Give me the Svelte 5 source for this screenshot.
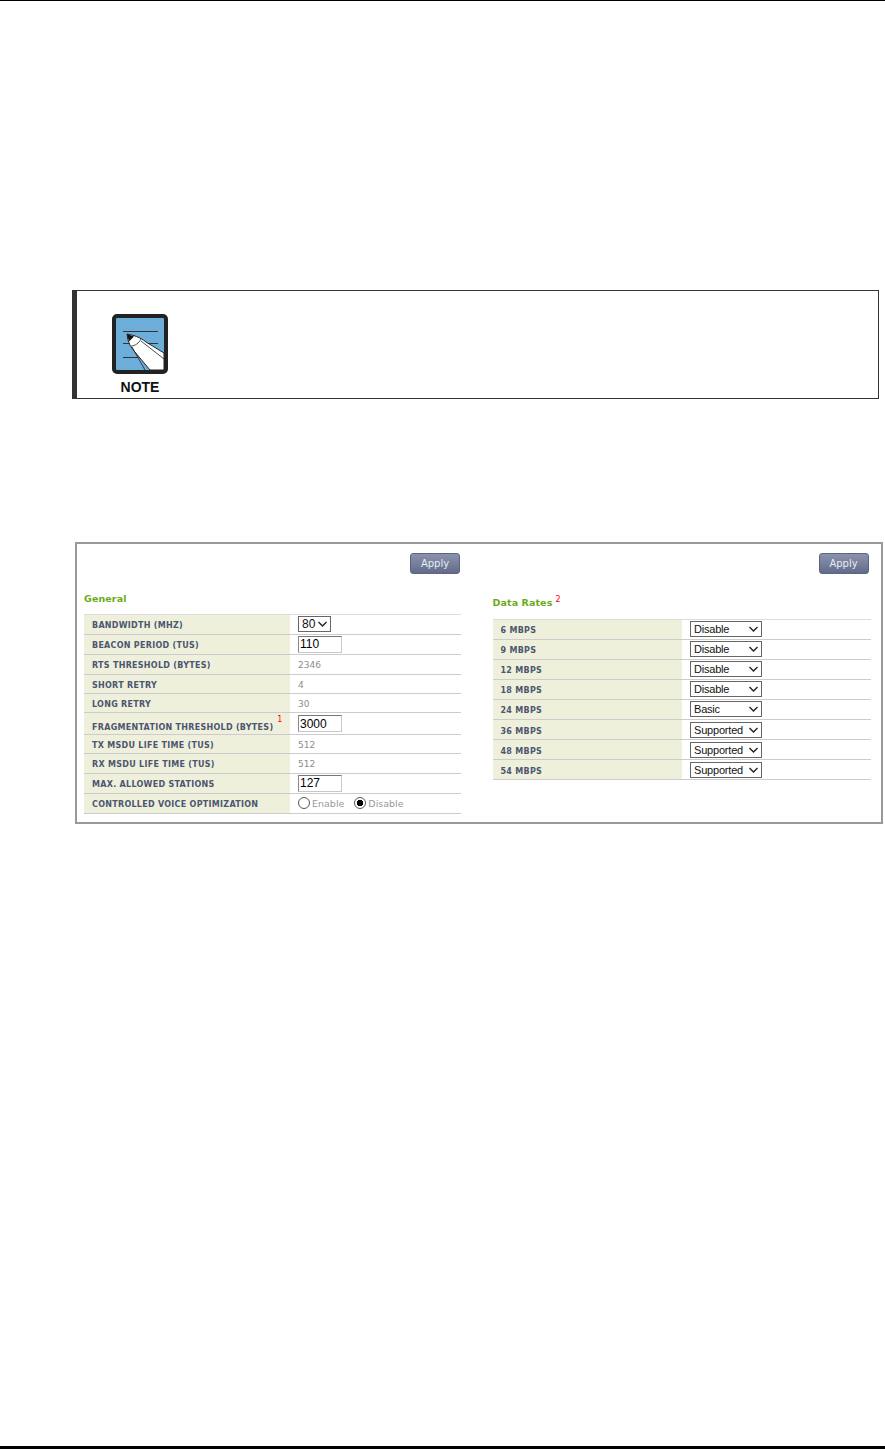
<script>
  const general = [
    { label: 'BANDWIDTH (MHZ)', kind: 'select', value: '80', cls: 'h20' },
    { label: 'BEACON PERIOD (TUS)', kind: 'input', value: '110', cls: 'h205' },
    { label: 'RTS THRESHOLD (BYTES)', kind: 'text', value: '2346', cls: 'h195' },
    { label: 'SHORT RETRY', kind: 'text', value: '4', cls: 'h19' },
    { label: 'LONG RETRY', kind: 'text', value: '30', cls: 'h195' },
    { label: 'FRAGMENTATION THRESHOLD (BYTES)', sup: '1', kind: 'input', value: '3000', cls: 'h22' },
    { label: 'TX MSDU LIFE TIME (TUS)', kind: 'text', value: '512', cls: 'h19' },
    { label: 'RX MSDU LIFE TIME (TUS)', kind: 'text', value: '512', cls: 'h195' },
    { label: 'MAX. ALLOWED STATIONS', kind: 'input', value: '127', cls: 'h20' },
    { label: 'CONTROLLED VOICE OPTIMIZATION', kind: 'radio', cls: 'h20' }
  ];
  const rates = [
    ['6 MBPS', 'Disable'], ['9 MBPS', 'Disable'], ['12 MBPS', 'Disable'], ['18 MBPS', 'Disable'],
    ['24 MBPS', 'Basic'], ['36 MBPS', 'Supported'], ['48 MBPS', 'Supported'], ['54 MBPS', 'Supported']
  ];
</script>

{#snippet dropdown(value, small)}
  <span class="sel-wrap">
    <select class="sel" class:small><option>{value}</option></select>
    <svg class="chev" width="9" height="6" viewBox="0 0 9 6" aria-hidden="true">
      <path d="M0.500 1L4.500 5L8.500 1" fill="none" stroke="#222" stroke-width="1.400" />
    </svg>
  </span>
{/snippet}

<div class="page">
  <section class="note">
    <div class="note-mark">
      <svg width="58" height="62" viewBox="111 312 58 62" aria-hidden="true">
        <rect x="114" y="315" width="52" height="56" rx="3" fill="#6cadd9" stroke="#222" stroke-width="4" />
        <path d="M123 330.500H158M123 342.500H158M123 356.500H138" stroke="#333" stroke-width="1" fill="none" />
        <path d="M127 333C133 334 140 336 146 341L164 352V369H150L134 350Q129 344 128 339Z" fill="#fff" stroke="#222" stroke-width="1" />
        <path d="M127 333L134 335.500L129 340.500Z" fill="#111" />
        <path d="M131 345C135 345 139 342 141 338M132 346L145 369M141 340L164 358" stroke="#222" stroke-width="0.800" fill="none" />
      </svg>
      <span class="note-word">NOTE</span>
    </div>
  </section>

  <section class="panel">
    <div class="col">
      <div class="apply-row"><button class="apply">Apply</button></div>
      <h3 class="title general">General</h3>
      <div class="table">
        {#each general as row}
          <div class="row {row.cls}">
            <div class="label" class:low={row.sup}>{row.label}{#if row.sup}<sup>{row.sup}</sup>{/if}</div>
            <div class="value" class:text={row.kind === 'text'}>
              {#if row.kind === 'select'}
                {@render dropdown(row.value, true)}
              {:else if row.kind === 'input'}
                <input class="field" value={row.value} />
              {:else if row.kind === 'radio'}
                <label class="radio"><input type="radio" name="voice" />Enable</label>
                <label class="radio"><input type="radio" name="voice" checked />Disable</label>
              {:else}
                {row.value}
              {/if}
            </div>
          </div>
        {/each}
      </div>
    </div>

    <div class="col right">
      <div class="apply-row"><button class="apply">Apply</button></div>
      <h3 class="title rates">Data Rates<sup>2</sup></h3>
      <div class="table rates-table">
        {#each rates as [label, value]}
          <div class="row rate">
            <div class="label">{label}</div>
            <div class="value">{@render dropdown(value, false)}</div>
          </div>
        {/each}
      </div>
    </div>
  </section>
</div>

<style>
  :global(body) { margin: 0; background: #fff; }
  .page {
    box-sizing: border-box;
    height: 1449px;
    border-top: 1px solid #000;
    border-bottom: 3px solid #000;
    padding: 289px 0 0 72px;
    font-family: "DejaVu Sans", sans-serif;
  }
  .note {
    box-sizing: border-box;
    width: 807px;
    height: 109px;
    border: 1px solid #333;
    border-left: 5px solid #333;
    padding: 22px 0 0 34px;
  }
  .note-mark { width: 58px; display: flex; flex-direction: column; align-items: center; }
  .note-mark svg { display: block; }
  .note-word {
    font: 700 14px/14px "Liberation Sans", sans-serif;
    color: #111;
    margin-top: 5px;
  }
  .panel {
    box-sizing: border-box;
    width: 808px;
    height: 282px;
    margin: 143px 0 0 3px;
    border: 2px solid #999;
    padding: 9px 11px 0 7px;
    display: grid;
    grid-template-columns: 377px 378px;
    column-gap: 31.500px;
  }
  .apply-row { display: flex; justify-content: flex-end; height: 22px; padding-right: 1px; }
  .right .apply-row { padding-right: 2px; }
  .apply {
    box-sizing: border-box;
    width: 50px;
    height: 21px;
    padding: 0;
    border: 1px solid #5b6480;
    border-radius: 3px;
    background: linear-gradient(#8a93ae, #626c8a);
    color: #e8ecf4;
    font: 10px/19px "DejaVu Sans", sans-serif;
  }
  .title {
    margin: 0;
    font: 700 9.500px/12px "DejaVu Sans", sans-serif;
    color: #6aab14;
    letter-spacing: 0.100px;
  }
  .general { margin-top: 18px; height: 19px; }
  .rates { margin-top: 22px; height: 19px; }
  .title sup { color: #f00; font-size: 8px; font-weight: 400; margin-left: 3px; line-height: 0; vertical-align: 4px; }
  .table { border-top: 1px solid #ddd; margin-top: 1.500px; }
  .rates-table { margin-top: 2.500px; }
  .row { display: grid; grid-template-columns: 206px 1fr; border-bottom: 1px solid #ccc; box-sizing: border-box; }
  .h19 { height: 19px; }
  .h195 { height: 19.500px; }
  .h20 { height: 20px; }
  .h205 { height: 20.500px; }
  .h22 { height: 22px; }
  .rate { height: 20.100px; grid-template-columns: 189.500px 1fr; }
  .label {
    box-sizing: border-box;
    background: #eef0dc;
    padding: 3px 0 0 8px;
    display: flex;
    align-items: center;
    font-size: 8px;
    font-weight: 700;
    letter-spacing: 0.280px;
    color: #4c5670;
    white-space: nowrap;
  }
  .label.low { padding-top: 7px; }
  .label sup { color: #f00; font-weight: 400; font-size: 8px; line-height: 0; margin-left: 4px; align-self: flex-start; margin-top: 0; }
  .value {
    display: flex;
    align-items: center;
    padding-left: 8px;
    color: #8c8c8c;
    font-size: 9px;
  }
  .value.text { padding-top: 2px; }
  .sel-wrap { position: relative; display: inline-flex; }
  .sel {
    appearance: none;
    box-sizing: border-box;
    width: 72px;
    height: 16px;
    padding: 0 0 0 3px;
    border: 1px solid #666;
    border-radius: 0;
    background: #fff;
    color: #111;
    font: 11px "Liberation Sans", sans-serif;
    letter-spacing: -0.200px;
  }
  .sel.small { width: 33px; font-size: 12px; letter-spacing: 0; }
  .chev { position: absolute; right: 4px; top: 5px; pointer-events: none; }
  .field {
    box-sizing: border-box;
    width: 44px;
    height: 17px;
    padding: 0 1px;
    border: 1px solid #c8c8c8;
    border-top-color: #777;
    border-left-color: #888;
    color: #000;
    font: 12px "Liberation Sans", sans-serif;
  }
  .radio { display: flex; align-items: center; gap: 2px; margin-right: 10px; font-size: 9.500px; color: #999; }
  .radio input {
    appearance: none;
    box-sizing: border-box;
    margin: 0;
    width: 12px;
    height: 12px;
    border: 1px solid #555;
    border-radius: 50%;
    background: #fff;
  }
  .radio input:checked { background: radial-gradient(circle, #000 3px, #fff 3.500px); }
</style>
